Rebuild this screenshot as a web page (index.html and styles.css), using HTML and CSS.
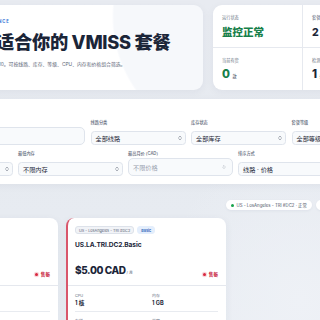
FILE: index.html
```html
<!DOCTYPE html>
<html lang="zh-CN">
<head>
<meta charset="utf-8">
<title>VMISS 套餐筛选</title>
<link rel="stylesheet" href="styles.css">
</head>
<body>
<div class="page">
  <section class="top">
    <div class="hero">
      <div class="eyebrow">VMISS · BALANCE</div>
      <h1 class="title">适合你的 VMISS 套餐</h1>
      <p class="sub">/10。可按线路、库存、等级、CPU、内存和价格组合筛选。</p>
    </div>
    <div class="stats">
      <div class="stat">
        <div class="stat-label">运行状态</div>
        <div class="stat-value green">监控正常</div>
      </div>
      <div class="stat">
        <div class="stat-label">套餐数量</div>
        <div class="stat-value">2 <span class="unit">款</span></div>
      </div>
      <div class="stat">
        <div class="stat-label">当前有货</div>
        <div class="stat-value green">0 <span class="unit">款</span></div>
      </div>
      <div class="stat">
        <div class="stat-label">检测线路</div>
        <div class="stat-value">1 <span class="unit">条</span></div>
      </div>
    </div>
  </section>

  <section class="filters">
    <div class="frow frow1">
      <div class="field">
        <div class="flabel">搜索</div>
        <div class="control input"><span class="ph">搜索套餐名称</span></div>
      </div>
      <div class="field">
        <div class="flabel">线路分类</div>
        <div class="control sel"><span>全部线路</span><svg class="arr" viewBox="0 0 6 10"><path d="M1.2 3.8 3 2l1.8 1.8M1.2 6.2 3 8l1.8-1.8"/></svg></div>
      </div>
      <div class="field">
        <div class="flabel">库存状态</div>
        <div class="control sel"><span>全部库存</span><svg class="arr" viewBox="0 0 6 10"><path d="M1.2 3.8 3 2l1.8 1.8M1.2 6.2 3 8l1.8-1.8"/></svg></div>
      </div>
      <div class="field">
        <div class="flabel">套餐等级</div>
        <div class="control sel"><span>全部等级</span><svg class="arr" viewBox="0 0 6 10"><path d="M1.2 3.8 3 2l1.8 1.8M1.2 6.2 3 8l1.8-1.8"/></svg></div>
      </div>
    </div>
    <div class="frow frow2">
      <div class="field">
        <div class="flabel">最低 CPU</div>
        <div class="control sel"><span>不限 CPU</span><svg class="arr" viewBox="0 0 6 10"><path d="M1.2 3.8 3 2l1.8 1.8M1.2 6.2 3 8l1.8-1.8"/></svg></div>
      </div>
      <div class="field">
        <div class="flabel">最低内存</div>
        <div class="control sel"><span>不限内存</span><svg class="arr" viewBox="0 0 6 10"><path d="M1.2 3.8 3 2l1.8 1.8M1.2 6.2 3 8l1.8-1.8"/></svg></div>
      </div>
      <div class="field">
        <div class="flabel">最高月价 (CAD)</div>
        <div class="control input"><span class="ph">不限价格</span><svg class="arr light" viewBox="0 0 6 10"><path d="M1.5 4 3 2.5 4.5 4M1.5 6 3 7.5 4.5 6"/></svg></div>
      </div>
      <div class="field">
        <div class="flabel">排序方式</div>
        <div class="control sel"><span>线路 · 价格</span><svg class="arr" viewBox="0 0 6 10"><path d="M1.2 3.8 3 2l1.8 1.8M1.2 6.2 3 8l1.8-1.8"/></svg></div>
      </div>
    </div>
  </section>

  <div class="status-row">
    <span class="pill"><i class="dot"></i>US - LosAngeles - TRI #DC2 · 正常</span>
    <span class="pill"><i class="dot"></i>最近检测 · 刚刚</span>
  </div>

  <section class="cards">
    <article class="card">
      <div class="tags"><span class="tag">US - LosAngeles - TRI #DC2</span><span class="tag blue">Pro</span></div>
      <div class="pname">US.LA.TRI.DC2.Pro</div>
      <div class="price-row">
        <div class="price">$9.00 CAD<span class="per"> / 月</span></div>
        <div class="soldout"><i class="rdot"></i>售罄</div>
      </div>
      <div class="specs">
        <div class="spec"><div class="slabel">CPU</div><div class="sval">2 核</div></div>
        <div class="spec"><div class="slabel">内存</div><div class="sval">2 GB</div></div>
        <div class="spec"><div class="slabel">存储</div><div class="sval">40 GB</div></div>
        <div class="spec"><div class="slabel">带宽</div><div class="sval">1 Gbps</div></div>
      </div>
    </article>
    <article class="card">
      <div class="tags"><span class="tag">US - LosAngeles - TRI #DC2</span><span class="tag blue">Basic</span></div>
      <div class="pname">US.LA.TRI.DC2.Basic</div>
      <div class="price-row">
        <div class="price">$5.00 CAD<span class="per"> / 月</span></div>
        <div class="soldout"><i class="rdot"></i>售罄</div>
      </div>
      <div class="specs">
        <div class="spec"><div class="slabel">CPU</div><div class="sval">1 核</div></div>
        <div class="spec"><div class="slabel">内存</div><div class="sval">1 GB</div></div>
        <div class="spec"><div class="slabel">存储</div><div class="sval">20 GB</div></div>
        <div class="spec"><div class="slabel">带宽</div><div class="sval">1 Gbps</div></div>
      </div>
    </article>
  </section>
</div>
</body>
</html>
```

FILE: styles.css
```css
* { box-sizing: border-box; margin: 0; padding: 0; }
html, body {
  width: 320px;
  height: 320px;
  overflow: hidden;
}
body {
  font-family: "Inter", "Noto Sans CJK SC", sans-serif;
  color: #1e293b;
  background:
    radial-gradient(ellipse 140px 160px at 300px 300px, #eef1f6 0, rgba(238,241,246,0) 100%),
    linear-gradient(180deg, #e8ebf1 0%, #e6eaf0 50%, #e9edf3 100%);
}
.page {
  margin-left: -110px;
  width: 520px;
  padding-top: 5px;
}

/* top row */
.top {
  display: grid;
  grid-template-columns: 313px 187px;
  column-gap: 10px;
  height: 85px;
}
.hero {
  background:
    radial-gradient(circle at 350px 12px, #f6f8fb 0 126px, #fafbfd 127px, rgba(255,255,255,0) 128px),
    #ffffff;
  border-radius: 9px;
  padding: 14px 0 0 106px;
  box-shadow: 0 2px 8px rgba(30, 45, 80, 0.05);
  overflow: hidden;
}
.eyebrow {
  font-size: 4.2px;
  line-height: 5px;
  font-weight: 700;
  letter-spacing: 0.9px;
  color: #2f6fd6;
  margin-left: -37px;
}
.title {
  margin-top: 8px;
  font-size: 18.3px;
  line-height: 21px;
  font-weight: 800;
  letter-spacing: -0.3px;
  color: #1b2538;
}
.sub {
  margin-top: 8px;
  font-size: 4.85px;
  line-height: 7px;
  color: #5b6576;
  margin-left: 1px;
}

.stats {
  background: #ffffff;
  border-radius: 9px;
  box-shadow: 0 2px 8px rgba(30, 45, 80, 0.05);
  display: grid;
  grid-template-columns: 90px 1fr;
  grid-template-rows: 43px 42px;
  overflow: hidden;
}
.stat {
  padding: 10px 9px 0 9px;
}
.stat:nth-child(1), .stat:nth-child(3) { border-right: 1px solid #e6e9ef; }
.stat:nth-child(1), .stat:nth-child(2) { border-bottom: 1px solid #e6e9ef; }
.stat-label {
  font-size: 4.2px;
  line-height: 6px;
  color: #6b7585;
}
.stat-value {
  margin-top: 5px;
  font-size: 10.5px;
  line-height: 13px;
  font-weight: 800;
  color: #1b2538;
}
.stat-value.green { color: #17804a; }
.stat:nth-child(3) .stat-value, .stat:nth-child(4) .stat-value { font-size: 11.5px; margin-top: 4px; }
.unit {
  font-size: 4.2px;
  font-weight: 500;
  color: #4b5565;
}

/* filters */
.filters {
  margin-top: 9px;
  background: #ffffff;
  border-radius: 9px;
  box-shadow: 0 2px 8px rgba(30, 45, 80, 0.05);
  padding: 21px 8px 8px 8px;
}
.frow {
  display: grid;
  height: 25px;
}
.frow1 {
  grid-template-columns: 187px 95px 95px 95px;
  column-gap: 5.5px;
}
.frow2 {
  margin-top: 6px;
  grid-template-columns: 115px 105px 105px 105px;
  column-gap: 5px;
}
.field {
  display: flex;
  flex-direction: column;
  justify-content: space-between;
}
.flabel {
  font-size: 4.2px;
  line-height: 5px;
  color: #5d6778;
  font-weight: 500;
}
.control {
  display: flex;
  align-items: center;
  justify-content: space-between;
  border: 0.8px solid #dfe4ec;
  border-radius: 3.5px;
  background: #f8fafc;
  padding: 0 3px 0 4px;
  font-size: 6.2px;
  color: #1e2838;
}
.control.sel { height: 14px; }
.control.input { height: 18px; border-radius: 5px; }
.ph { color: #98a1ae; }
.arr {
  width: 4px;
  height: 6px;
  fill: none;
  stroke: #3a4353;
  stroke-width: 0.9;
  stroke-linecap: round;
  stroke-linejoin: round;
}
.arr.light { stroke: #9aa2ae; margin-right: 3px; }

/* status pills */
.status-row {
  margin-top: 16px;
  display: flex;
  gap: 4px;
  padding-left: 336px;
  height: 10px;
}
.pill {
  display: flex;
  align-items: center;
  gap: 2.5px;
  height: 10px;
  padding: 0 5px;
  border-radius: 6px;
  background: #ffffff;
  box-shadow: 0 1px 3px rgba(30, 45, 80, 0.06);
  font-size: 4.3px;
  color: #4a5465;
  white-space: nowrap;
}
.dot {
  width: 3px;
  height: 3px;
  border-radius: 50%;
  background: #17a34a;
}

/* cards */
.cards {
  margin-top: 8px;
  padding-left: 8px;
  display: grid;
  grid-template-columns: 160px 160px 160px;
  column-gap: 8px;
}
.card {
  background: #ffffff;
  border-radius: 8px;
  border-left: 2px solid #d9566b;
  box-shadow: 0 2px 8px rgba(30, 45, 80, 0.06);
  padding: 8px 8px 0 7px;
  height: 120px;
}
.tags {
  display: flex;
  gap: 3px;
  height: 8px;
}
.tag {
  display: flex;
  align-items: center;
  height: 8px;
  padding: 0 3px;
  border-radius: 3px;
  background: #f1f3f7;
  border: 0.6px solid #dde2ea;
  font-size: 3.8px;
  color: #5a6475;
  white-space: nowrap;
}
.tag.blue {
  background: #e4eefc;
  border-color: #e4eefc;
  color: #2a63b6;
  font-weight: 600;
}
.pname {
  margin-top: 7px;
  font-size: 6.6px;
  line-height: 9px;
  font-weight: 700;
  color: #1b2538;
  letter-spacing: -0.1px;
}
.price-row {
  margin-top: 16px;
  display: flex;
  justify-content: space-between;
  align-items: flex-end;
  height: 13px;
}
.price {
  font-size: 10px;
  line-height: 13px;
  font-weight: 800;
  letter-spacing: -0.4px;
  color: #1b2538;
}
.per {
  font-size: 3.8px;
  font-weight: 500;
  color: #7a8393;
  letter-spacing: 0;
}
.soldout {
  display: flex;
  align-items: center;
  gap: 3px;
  font-size: 4.6px;
  line-height: 7px;
  color: #c8243e;
  font-weight: 600;
  margin-bottom: 1px;
}
.rdot {
  width: 3px;
  height: 3px;
  border-radius: 50%;
  background: #d8273f;
  box-shadow: 0 0 0 1.2px rgba(216, 39, 63, 0.18);
}
.specs {
  margin: 6px -8px 0 -7px;
  padding: 0 8px 0 7px;
  border-top: 1px solid #e5e8ee;
  display: grid;
  grid-template-columns: 77px 1fr;
}
.spec {
  padding: 6.5px 0 4px 0;
  border-bottom: 1px solid #e8ebf0;
}
.slabel {
  font-size: 3.9px;
  line-height: 5px;
  color: #6b7585;
}
.sval {
  margin-top: 1px;
  font-size: 5.6px;
  line-height: 8px;
  font-weight: 700;
  color: #1b2538;
}
```
